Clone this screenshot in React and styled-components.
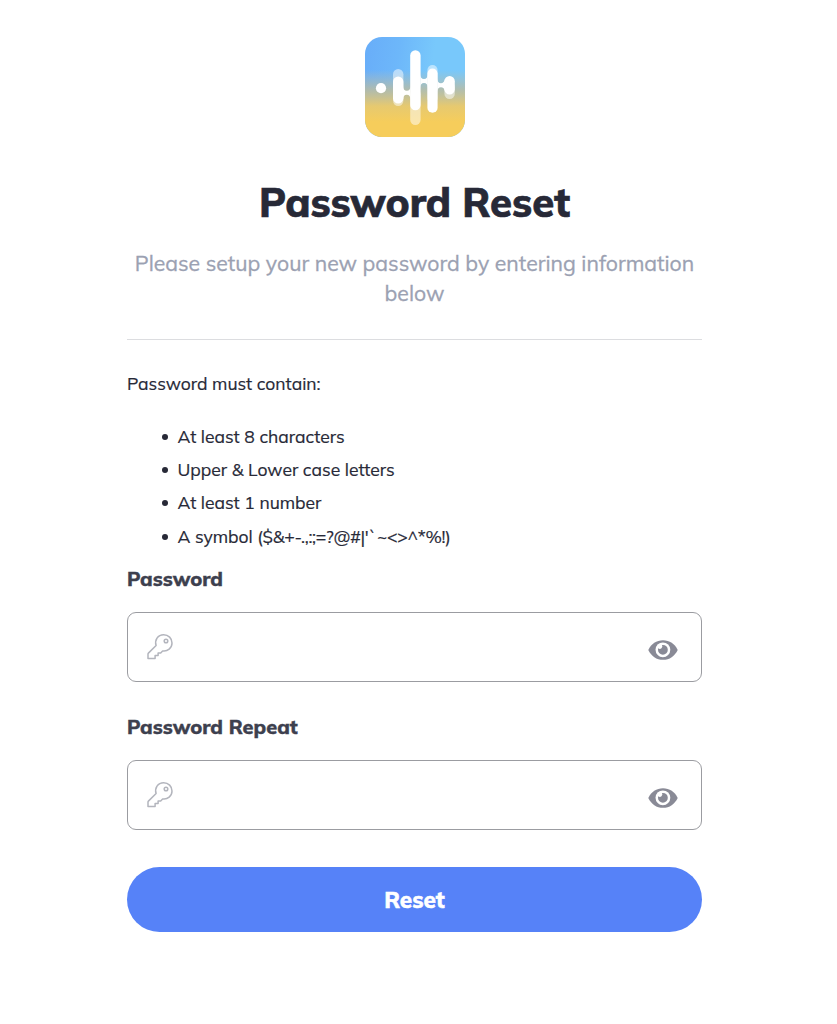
import React from "react";
import styled, { createGlobalStyle } from "styled-components";

const GlobalStyle = createGlobalStyle`
  *, *::before, *::after { box-sizing: border-box; }
  html, body { margin: 0; background: #fff; }
  body {
    font-family: Mulish, Muli, Lato, "Liberation Sans", sans-serif;
    color: #272937;
    -webkit-text-stroke: 0.2px currentColor;
  }
`;

const Page = styled.main`
  width: 829px;
  min-height: 1024px;
  padding: 37px 127px 0;
  display: flex;
  flex-direction: column;
`;

const Logo = styled.svg`
  display: block;
  width: 100px;
  height: 100px;
  align-self: center;
`;

const Title = styled.h1`
  margin: 35px 0 0;
  font-size: 40px;
  line-height: 60px;
  font-weight: 800;
  text-align: center;
  white-space: nowrap;
  -webkit-text-stroke-width: 0.7px;
`;

const Subtitle = styled.p`
  margin: 16px 0 0;
  font-size: 21.27px;
  line-height: 30px;
  text-align: center;
  color: #9ba1b2;
  -webkit-text-stroke-width: 0.3px;
`;

const Divider = styled.hr`
  width: 100%;
  height: 1px;
  margin: 31px 0 0;
  border: 0;
  background: #dcdde0;
`;

const RulesIntro = styled.p`
  margin: 31px 0 0;
  font-size: 17.5px;
  line-height: 24px;
`;

const Rules = styled.ul`
  margin: 24px 0 0;
  padding: 0;
  list-style: none;
`;

const Rule = styled.li`
  display: flex;
  align-items: center;
  height: 33.4px;
  padding-left: 34px;
  font-size: 17.5px;
  white-space: pre;

  &::before {
    content: "";
    width: 6px;
    height: 6px;
    margin: 2px 10px 0 0.5px;
    border-radius: 50%;
    background: currentColor;
  }
`;

const Symbols = styled.span`
  letter-spacing: -0.28px;
`;

const Field = styled.div`
  display: flex;
  flex-direction: column;
  margin-top: ${(p) => p.$gap};
`;

const Label = styled.label`
  font-size: 20px;
  line-height: 24px;
  font-weight: 800;
  color: #3d404e;
  -webkit-text-stroke-width: 0.4px;
`;

const InputBox = styled.div`
  display: flex;
  align-items: center;
  height: 70px;
  margin-top: 21px;
  padding: 0 23.5px 0 18.5px;
  border: 1.4px solid #9b9ca1;
  border-radius: 9px;
`;

const Input = styled.input`
  flex: 1;
  min-width: 0;
  height: 100%;
  padding: 0 16px;
  border: 0;
  outline: 0;
  background: transparent;
  font: inherit;
  font-size: 20px;
`;

const KeySvg = styled.svg`
  width: 27px;
  height: 27px;
  flex: none;
`;

const ToggleButton = styled.button`
  display: flex;
  margin: 6px 0 0;
  padding: 0;
  border: 0;
  background: none;
  color: #898a96;
`;

const SubmitButton = styled.button`
  height: 65px;
  margin: 37px 0 0;
  padding: 0;
  border: 0;
  border-radius: 33px;
  background: #5682f8;
  color: #fff;
  font: inherit;
  font-size: 22.5px;
  font-weight: 800;
  -webkit-text-stroke: 0.5px #fff;
`;

function WaveLogo() {
  return (
    <Logo viewBox="0 0 100 100" aria-hidden="true">
      <defs>
        <linearGradient id="sky" x1="0" y1="0" x2="1" y2="0.15">
          <stop offset="0" stopColor="#68adf9" />
          <stop offset="0.35" stopColor="#6db7fa" />
          <stop offset="0.7" stopColor="#78c8fb" />
        </linearGradient>
        <linearGradient id="sand" x1="0" y1="0" x2="0" y2="1">
          <stop offset="0.33" stopColor="#b5bfb4" stopOpacity="0" />
          <stop offset="0.52" stopColor="#b9bca4" stopOpacity="0.85" />
          <stop offset="0.69" stopColor="#e6c970" />
          <stop offset="0.85" stopColor="#f6cd5b" />
        </linearGradient>
      </defs>
      <rect width="100" height="100" rx="17" fill="url(#sky)" />
      <rect width="100" height="100" rx="17" fill="url(#sand)" />
      <g fill="#fff" fillOpacity="0.5">
        <rect x="28" y="32" width="10.4" height="37" rx="5.2" />
        <rect x="45.2" y="52" width="10.4" height="36" rx="5.2" />
        <rect x="62.4" y="28" width="10.2" height="38" rx="5.1" />
        <rect x="79.4" y="45" width="10.4" height="17" rx="5.2" />
      </g>
      <g fill="#fff">
        <circle cx="16" cy="51.2" r="5.1" />
        <rect x="28" y="39.5" width="10.4" height="27" rx="5.2" />
        <rect x="45.2" y="13.3" width="10.4" height="60" rx="5.2" />
        <rect x="62.4" y="31.5" width="10.2" height="44.3" rx="5.1" />
        <rect x="79.4" y="39" width="10.4" height="18.4" rx="5.2" />
        <path d="M38 49Q38 53.7 41.8 53.7Q45.5 53.7 45.5 49V63Q45.5 57.7 41.8 57.7Q38 57.7 38 63Z" />
        <path d="M55.3 37Q55.3 42 59 42Q62.7 42 62.7 37V51Q62.7 46 59 46Q55.3 46 55.3 51Z" />
        <path d="M72.3 41Q72.3 46.3 76 46.3Q79 46.3 80.2 41.5V54.5Q79 50.2 76 50.2Q72.3 50.2 72.3 55Z" />
      </g>
    </Logo>
  );
}

function KeyIcon() {
  return (
    <KeySvg viewBox="0 0 27 27" fill="none" stroke="#b3b5bd" strokeWidth="1.5" strokeLinejoin="round" aria-hidden="true">
      <path d="M9.1 12.5C7.4 7.2 10.7 1.7 16.7 1.7C21.4 1.7 25 5.4 25 9.9C25 14.9 20.6 18.7 15.6 17.9L13.7 19.9H11.1V22.5H8.1V25.6H1V21C1 20.7 1.1 20.4 1.4 20.1Z" />
      <circle cx="19" cy="8" r="1.8" />
    </KeySvg>
  );
}

function EyeIcon() {
  return (
    <svg width="30" height="20" viewBox="0 0 30 20" aria-hidden="true">
      <path d="M0.3 9.9C3.2 3.8 8.5 0.2 15 0.2S26.8 3.8 29.7 9.9C26.8 16 21.5 19.8 15 19.8S3.2 16 0.3 9.9Z" fill="currentColor" />
      <circle cx="14.9" cy="9.8" r="7.4" fill="#fff" />
      <path d="M14.9 4.9A4.9 4.9 0 1 1 10 9.8C10 9.3 10.1 8.8 10.3 8.3A2.5 2.5 0 0 0 14 5.1C14.3 5 14.6 4.9 14.9 4.9Z" fill="currentColor" />
    </svg>
  );
}

function PasswordField({ id, label, gap }) {
  return (
    <Field $gap={gap}>
      <Label htmlFor={id}>{label}</Label>
      <InputBox>
        <KeyIcon />
        <Input id={id} type="password" />
        <ToggleButton type="button" aria-label="Show password"><EyeIcon /></ToggleButton>
      </InputBox>
    </Field>
  );
}

export default function App() {
  return (
    <>
      <GlobalStyle />
      <Page>
        <WaveLogo />
        <Title>Password Reset</Title>
        <Subtitle>Please setup your new password by entering information below</Subtitle>
        <Divider />
        <RulesIntro>Password must contain:</RulesIntro>
        <Rules>
          <Rule>At least 8 characters</Rule>
          <Rule>Upper &amp; Lower case letters</Rule>
          <Rule>At least 1 number</Rule>
          <Rule>
            <span>{"A symbol "}</span>
            <Symbols>{"($&+-.,:;=?@#|'`~<>^*%!)"}</Symbols>
          </Rule>
        </Rules>
        <PasswordField id="password" label="Password" gap="14px" />
        <PasswordField id="password-repeat" label="Password Repeat" gap="33px" />
        <SubmitButton type="button">Reset</SubmitButton>
      </Page>
    </>
  );
}
